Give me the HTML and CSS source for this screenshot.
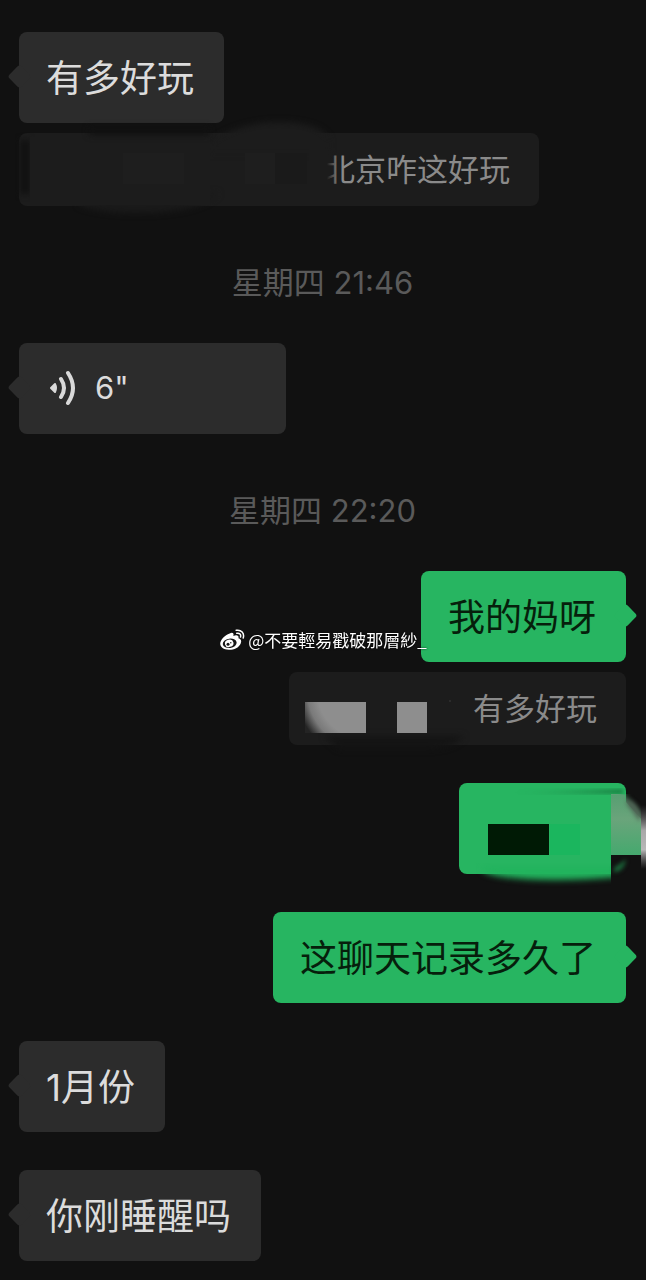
FILE: index.html
```html
<!DOCTYPE html>
<html lang="zh-CN">
<head>
<meta charset="utf-8">
<meta name="viewport" content="width=device-width, initial-scale=1">
<title>聊天</title>
<link rel="stylesheet" href="styles.css">
</head>
<body>

<main class="chat">
  <div class="message received">
    <div class="bubble">有多好玩</div>
    <div class="quote">
      <!-- Hidden sender name -->
      <svg class="smudge" width="305" height="73" viewBox="0 0 305 73" aria-hidden="true">
        <defs>
          <filter id="soft" x="-50%" y="-100%" width="200%" height="300%" color-interpolation-filters="sRGB"><feGaussianBlur stdDeviation="3"/></filter>
          <linearGradient id="fade">
            <stop offset="0.6" stop-color="#1c1c1c"/>
            <stop offset="1" stop-color="#1c1c1c" stop-opacity="0"/>
          </linearGradient>
        </defs>
        <rect x="1" y="7" width="10" height="54" fill="#111" filter="url(#soft)"/>
        <path d="M190 10Q220 -11 260 -11Q300 -11 310 6V20H190Z" fill="#1c1c1c" filter="url(#soft)"/>
        <path d="M60 60H200Q180 80 120 80Q80 80 60 72Z" fill="#1a1a1a" filter="url(#soft)"/>
        <rect x="11" y="4" width="180" height="68" fill="#1c1c1c"/>
        <path d="M70 -6H190V2H70Z" fill="#111" filter="url(#soft)"/>
        <rect x="104" y="20" width="61" height="31" fill="#1e1e1e"/>
        <rect x="226" y="20" width="30" height="31" fill="#1e1e1e"/>
        <rect x="256" y="20" width="32" height="31" fill="#1a1a1a"/>
        <rect x="290" y="16" width="30" height="42" fill="url(#fade)"/>
      </svg>
      <span>北京咋这好玩</span>
    </div>
  </div>

  <time class="time">星期四 21:46</time>

  <div class="message received">
    <button class="bubble voice" type="button" aria-label="6&quot;">
      <svg width="28" height="36" viewBox="0 0 28 36" aria-hidden="true">
        <path d="M2 18L6 14Q8 18 6 22Z" fill="#d9d9d9" stroke="#d9d9d9" stroke-width="2" stroke-linejoin="round"/>
        <path d="M12 9Q18 18 12 27M19 3Q29 18 19 33" fill="none" stroke="#d9d9d9" stroke-width="4" stroke-linecap="round"/>
      </svg>
      <span>6"</span>
    </button>
  </div>

  <time class="time">星期四 22:20</time>

  <div class="message sent">
    <div class="bubble">我的妈呀</div>
    <div class="quote">
      <svg class="smudge" width="184" height="73" viewBox="0 0 184 73" aria-hidden="true">
        <defs>
          <radialGradient id="block" gradientUnits="userSpaceOnUse" cx="77" cy="18" r="70">
            <stop offset="0.7" stop-color="#8e8e8e"/>
            <stop offset="0.84" stop-color="#7a7a7a"/>
            <stop offset="1" stop-color="#242424"/>
          </radialGradient>
        </defs>
        <path d="M35 64H175Q165 76 140 77H50Z" fill="#141414" filter="url(#soft)"/>
        <rect x="16" y="30" width="61" height="31" fill="url(#block)"/>
        <rect x="108" y="30" width="30" height="31" fill="#8e8e8e"/>
        <circle cx="161" cy="29" r="1" fill="#303030"/>
      </svg>
      <span>有多好玩</span>
    </div>
  </div>

  <div class="message sent">
    <div class="bubble hidden-text">
      <svg class="smudge" width="167" height="91" viewBox="0 0 167 91" aria-hidden="true">
        <defs>
          <linearGradient id="patch" x1="0" y1="0" x2="0" y2="1">
            <stop offset="0" stop-color="#579f72"/>
            <stop offset="0.4" stop-color="#6aa47b"/>
            <stop offset="1" stop-color="#45a96e"/>
          </linearGradient>
          <linearGradient id="edge" x1="0" y1="0" x2="0" y2="1">
            <stop offset="0" stop-color="#777" stop-opacity="0"/>
            <stop offset="0.4" stop-color="#a8a8a8"/>
            <stop offset="0.7" stop-color="#b8b8b8"/>
            <stop offset="1" stop-color="#777" stop-opacity="0"/>
          </linearGradient>
          <linearGradient id="line">
            <stop offset="0" stop-color="#126031" stop-opacity="0"/>
            <stop offset="1" stop-color="#126031"/>
          </linearGradient>
          <clipPath id="left-part"><path d="M0 80H152V120H0Z"/></clipPath>
          <clipPath id="right-part"><path d="M152 11H182V72H152Z"/></clipPath>
          <filter id="blur" x="-50%" y="-50%" width="200%" height="200%" color-interpolation-filters="sRGB"><feGaussianBlur stdDeviation="2"/></filter>
        </defs>
        <g clip-path="url(#left-part)">
          <path d="M24 84H160V94Q90 100 45 94Q30 92 24 88Z" fill="#22b35d" filter="url(#soft)"/>
        </g>
        <path d="M50 10L164 7V10H50Z" fill="url(#line)" filter="url(#blur)"/>
        <rect x="91" y="41" width="30" height="31" fill="#1bb65e"/>
        <rect x="29" y="41" width="61" height="31" fill="#001a05"/>
        <g clip-path="url(#right-part)">
          <path d="M140 0H158Q167 18 176 26Q184 32 190 44V80H140Z" fill="url(#patch)" filter="url(#soft)"/>
          <path d="M152 12H166V18L182 36V72H152Z" fill="url(#patch)"/>
          <path d="M168 16Q180 20 182 34L180 38Q174 28 168 22Z" fill="#4f6355" filter="url(#blur)"/>
        </g>
        <path d="M152 72H168V92H152Z" fill="#111"/>
        <path d="M154 89Q165 89 167 76Q162 81 156 84Z" fill="#1a6c3b" filter="url(#blur)"/>
        <rect x="182" y="22" width="5" height="64" fill="url(#edge)"/>
      </svg>
    </div>
  </div>

  <div class="message sent">
    <div class="bubble">这聊天记录多久了</div>
  </div>

  <div class="message received">
    <div class="bubble">1月份</div>
  </div>

  <div class="message received">
    <div class="bubble">你刚睡醒吗</div>
  </div>
</main>

<!-- Watermark over the chat -->
<div class="watermark">
  <svg width="26" height="22" viewBox="0 0 26 22" aria-hidden="true">
    <path d="M10.500 4.500C13 3 15 4 14.200 7C17 5.800 20 6.200 19.300 9.300C22 10.200 22.600 12 21.500 14.500C19.500 19 14.500 21 9.500 20.800C4.500 20.600 1 18 1 14.500C1 11 5.500 6 10.500 4.500Z" fill="#fff"/>
    <ellipse cx="10.500" cy="14.300" rx="7" ry="4.700" transform="rotate(-8 10.500 14.300)" fill="#171717"/>
    <ellipse cx="10" cy="14.300" rx="4.300" ry="3.700" transform="rotate(-15 10 14.300)" fill="#fff"/>
    <circle cx="8.800" cy="15.200" r="1.500" fill="#171717"/>
    <circle cx="11.600" cy="13.700" r="0.700" fill="#171717"/>
    <path d="M17 1.300C22 0.300 25.500 4.500 24 9M17.600 4.300C20.500 3.800 22 5.700 21.300 8" fill="none" stroke="#fff" stroke-width="1.500" stroke-linecap="round"/>
  </svg>
  <span>@不要輕易戳破那層紗_</span>
</div>

</body>
</html>
```
FILE: styles.css
```css
body {
  margin: 0;
  background-color: #111;
  font-family: Inter, "Noto Sans CJK SC", sans-serif;
  font-weight: 370;
  overflow-x: hidden;
}

.chat {
  display: flex;
  flex-direction: column;
  gap: 38px;
  padding: 32px 20px 19px 19px;
}

.message {
  display: flex;
  flex-direction: column;
  align-items: flex-start;
  gap: 10px;
}

.sent {
  align-items: flex-end;
}

.bubble {
  position: relative;
  box-sizing: border-box;
  min-height: 91px;
  padding: 19px 30px 17px 27px;
  border: none;
  border-radius: 8px;
  background-color: #2c2c2c;
  color: #dcdcdc;
  font-size: 37px;
  line-height: 55px;
}

.sent .bubble {
  background-color: #27b561;
  color: #061f0c;
}

/* Small arrow at the side of the bubble */
.bubble::before {
  content: "";
  position: absolute;
  top: 36px;
  left: -8px;
  width: 17px;
  height: 17px;
  border-radius: 3px;
  background-color: inherit;
  transform: rotate(45deg);
}

.sent .bubble::before {
  left: auto;
  right: -8px;
}

.voice {
  display: flex;
  align-items: center;
  gap: 18px;
  width: 267px;
  padding: 17px 30px 19px;
  font-family: inherit;
  font-weight: inherit;
  font-size: 31px;
  cursor: pointer;
}

.sent .hidden-text {
  width: 167px;
  padding: 0;
}

.sent .hidden-text::before {
  display: none;
}

.quote {
  display: flex;
  padding-right: 29px;
  border-radius: 8px;
  background-color: #1c1c1c;
  color: #8a8a8a;
  font-size: 31px;
  line-height: 73px;
}

.smudge {
  display: block;
  position: relative;
  overflow: visible;
}

.time {
  padding-top: 16px;
  color: #5a5a5a;
  font-size: 31px;
  line-height: 45px;
  text-align: center;
}

.watermark {
  position: fixed;
  top: 50%;
  left: 50%;
  display: flex;
  align-items: center;
  gap: 3px;
  transform: translate(-50%, -50%);
  color: #fff;
  font-family: "Noto Sans CJK TC", sans-serif;
  font-weight: 400;
  font-size: 17px;
  line-height: 24px;
  white-space: nowrap;
  text-shadow: 0 0 2px #000;
}
```
